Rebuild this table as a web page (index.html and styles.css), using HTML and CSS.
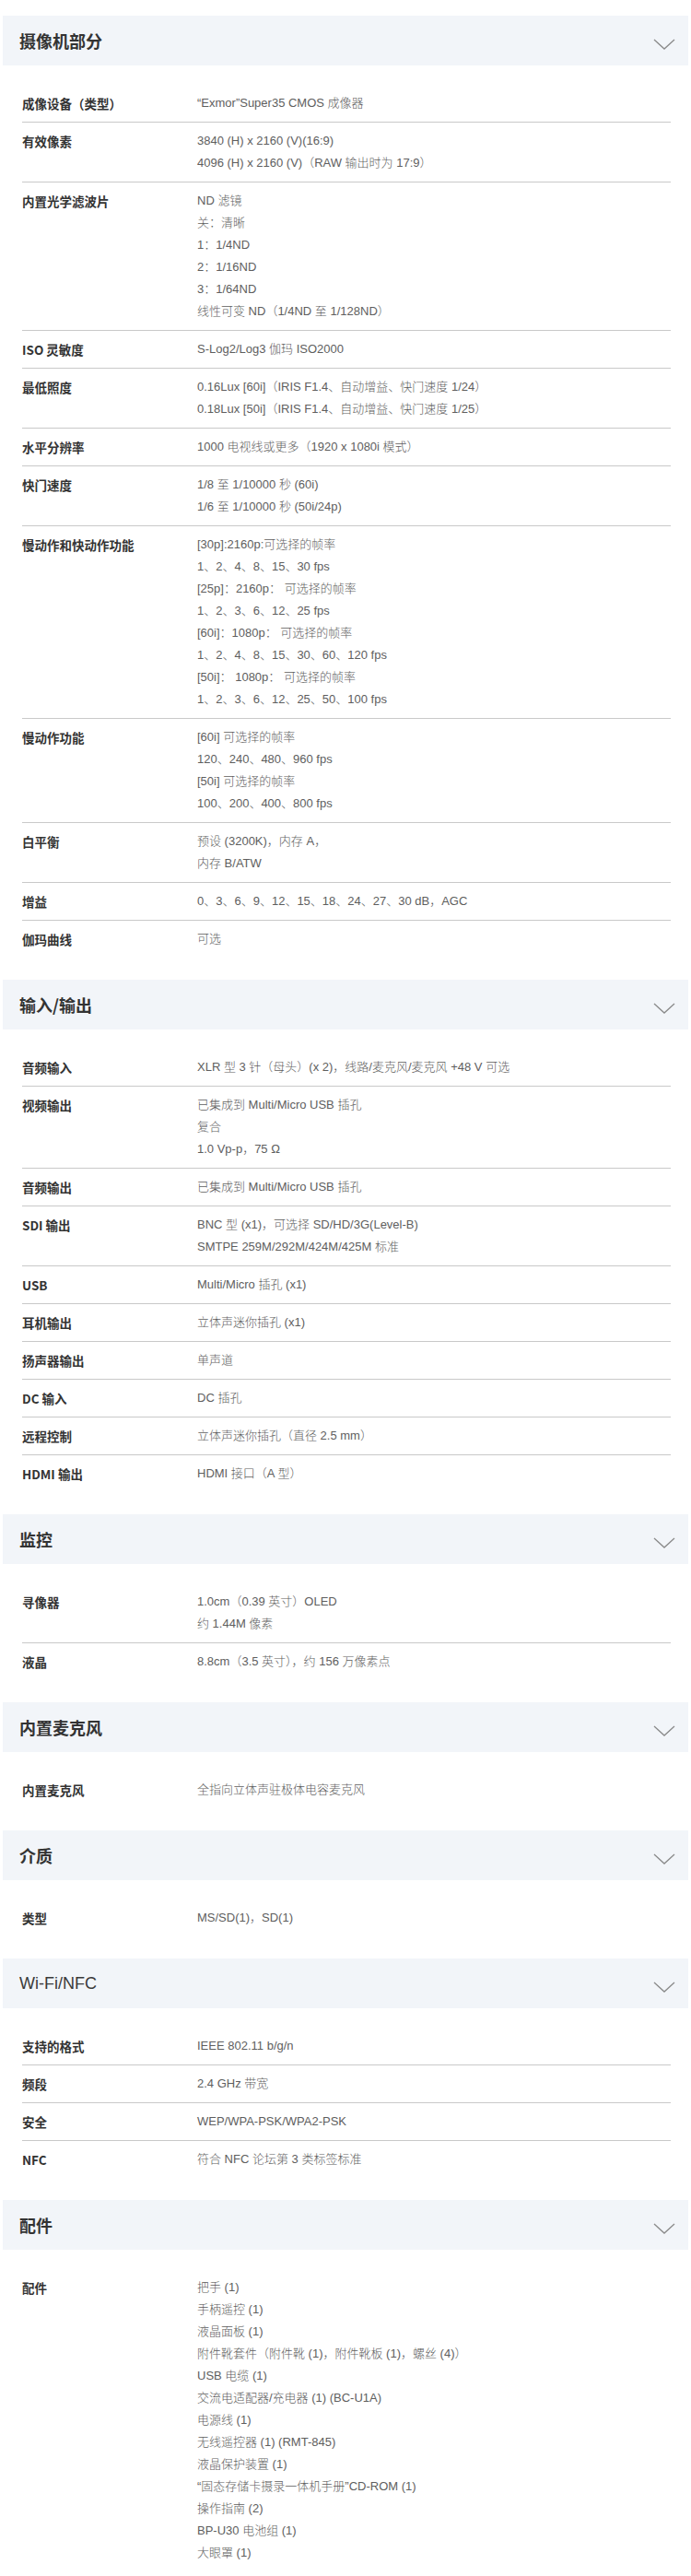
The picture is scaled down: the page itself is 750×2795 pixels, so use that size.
FILE: index.html
```html
<!DOCTYPE html>
<html lang="zh-CN">
<head>
<meta charset="utf-8">
<title>规格</title>
<link rel="stylesheet" href="styles.css">
</head>
<body>
<div class="page">

<section class="spec">
  <div class="band"><h2 class="title">摄像机部分</h2><svg class="chev" viewBox="0 0 24 12" width="24" height="12"><polyline points="1,1 12,11 23,1"/></svg></div>
  <div class="body">
    <div class="row"><div class="k">成像设备（类型）</div><div class="v"><div>“Exmor”Super35 CMOS 成像器</div></div></div>
    <div class="row"><div class="k">有效像素</div><div class="v"><div>3840 (H) x 2160 (V)(16:9)</div><div>4096 (H) x 2160 (V)（RAW 输出时为 17:9）</div></div></div>
    <div class="row"><div class="k">内置光学滤波片</div><div class="v"><div>ND 滤镜</div><div>关：清晰</div><div>1：1/4ND</div><div>2：1/16ND</div><div>3：1/64ND</div><div>线性可变 ND（1/4ND 至 1/128ND）</div></div></div>
    <div class="row"><div class="k">ISO 灵敏度</div><div class="v"><div>S-Log2/Log3 伽玛 ISO2000</div></div></div>
    <div class="row"><div class="k">最低照度</div><div class="v"><div>0.16Lux [60i]（IRIS F1.4、自动增益、快门速度 1/24）</div><div>0.18Lux [50i]（IRIS F1.4、自动增益、快门速度 1/25）</div></div></div>
    <div class="row"><div class="k">水平分辨率</div><div class="v"><div>1000 电视线或更多（1920 x 1080i 模式）</div></div></div>
    <div class="row"><div class="k">快门速度</div><div class="v"><div>1/8 至 1/10000 秒 (60i)</div><div>1/6 至 1/10000 秒 (50i/24p)</div></div></div>
    <div class="row"><div class="k">慢动作和快动作功能</div><div class="v"><div>[30p]:2160p:可选择的帧率</div><div>1、2、4、8、15、30 fps</div><div>[25p]：2160p： 可选择的帧率</div><div>1、2、3、6、12、25 fps</div><div>[60i]：1080p： 可选择的帧率</div><div>1、2、4、8、15、30、60、120 fps</div><div>[50i]： 1080p： 可选择的帧率</div><div>1、2、3、6、12、25、50、100 fps</div></div></div>
    <div class="row"><div class="k">慢动作功能</div><div class="v"><div>[60i] 可选择的帧率</div><div>120、240、480、960 fps</div><div>[50i] 可选择的帧率</div><div>100、200、400、800 fps</div></div></div>
    <div class="row"><div class="k">白平衡</div><div class="v"><div>预设 (3200K)，内存 A，</div><div>内存 B/ATW</div></div></div>
    <div class="row"><div class="k">增益</div><div class="v"><div>0、3、6、9、12、15、18、24、27、30 dB，AGC</div></div></div>
    <div class="row"><div class="k">伽玛曲线</div><div class="v"><div>可选</div></div></div>
  </div>
</section>

<section class="spec">
  <div class="band"><h2 class="title">输入/输出</h2><svg class="chev" viewBox="0 0 24 12" width="24" height="12"><polyline points="1,1 12,11 23,1"/></svg></div>
  <div class="body">
    <div class="row"><div class="k">音频输入</div><div class="v"><div>XLR 型 3 针（母头）(x 2)，线路/麦克风/麦克风 +48 V 可选</div></div></div>
    <div class="row"><div class="k">视频输出</div><div class="v"><div>已集成到 Multi/Micro USB 插孔</div><div>复合</div><div>1.0 Vp-p，75 Ω</div></div></div>
    <div class="row"><div class="k">音频输出</div><div class="v"><div>已集成到 Multi/Micro USB 插孔</div></div></div>
    <div class="row"><div class="k">SDI 输出</div><div class="v"><div>BNC 型 (x1)，可选择 SD/HD/3G(Level-B)</div><div>SMTPE 259M/292M/424M/425M 标准</div></div></div>
    <div class="row"><div class="k">USB</div><div class="v"><div>Multi/Micro 插孔 (x1)</div></div></div>
    <div class="row"><div class="k">耳机输出</div><div class="v"><div>立体声迷你插孔 (x1)</div></div></div>
    <div class="row"><div class="k">扬声器输出</div><div class="v"><div>单声道</div></div></div>
    <div class="row"><div class="k">DC 输入</div><div class="v"><div>DC 插孔</div></div></div>
    <div class="row"><div class="k">远程控制</div><div class="v"><div>立体声迷你插孔（直径 2.5 mm）</div></div></div>
    <div class="row"><div class="k">HDMI 输出</div><div class="v"><div>HDMI 接口（A 型）</div></div></div>
  </div>
</section>

<section class="spec">
  <div class="band"><h2 class="title">监控</h2><svg class="chev" viewBox="0 0 24 12" width="24" height="12"><polyline points="1,1 12,11 23,1"/></svg></div>
  <div class="body">
    <div class="row"><div class="k">寻像器</div><div class="v"><div>1.0cm（0.39 英寸）OLED</div><div>约 1.44M 像素</div></div></div>
    <div class="row"><div class="k">液晶</div><div class="v"><div>8.8cm（3.5 英寸），约 156 万像素点</div></div></div>
  </div>
</section>

<section class="spec">
  <div class="band"><h2 class="title">内置麦克风</h2><svg class="chev" viewBox="0 0 24 12" width="24" height="12"><polyline points="1,1 12,11 23,1"/></svg></div>
  <div class="body">
    <div class="row"><div class="k">内置麦克风</div><div class="v"><div>全指向立体声驻极体电容麦克风</div></div></div>
  </div>
</section>

<section class="spec">
  <div class="band"><h2 class="title">介质</h2><svg class="chev" viewBox="0 0 24 12" width="24" height="12"><polyline points="1,1 12,11 23,1"/></svg></div>
  <div class="body">
    <div class="row"><div class="k">类型</div><div class="v"><div>MS/SD(1)，SD(1)</div></div></div>
  </div>
</section>

<section class="spec">
  <div class="band"><h2 class="title title-latin">Wi-Fi/NFC</h2><svg class="chev" viewBox="0 0 24 12" width="24" height="12"><polyline points="1,1 12,11 23,1"/></svg></div>
  <div class="body">
    <div class="row"><div class="k">支持的格式</div><div class="v"><div>IEEE 802.11 b/g/n</div></div></div>
    <div class="row"><div class="k">频段</div><div class="v"><div>2.4 GHz 带宽</div></div></div>
    <div class="row"><div class="k">安全</div><div class="v"><div>WEP/WPA-PSK/WPA2-PSK</div></div></div>
    <div class="row"><div class="k">NFC</div><div class="v"><div>符合 NFC 论坛第 3 类标签标准</div></div></div>
  </div>
</section>

<section class="spec">
  <div class="band"><h2 class="title">配件</h2><svg class="chev" viewBox="0 0 24 12" width="24" height="12"><polyline points="1,1 12,11 23,1"/></svg></div>
  <div class="body last">
    <div class="row"><div class="k">配件</div><div class="v"><div>把手 (1)</div><div>手柄遥控 (1)</div><div>液晶面板 (1)</div><div>附件靴套件（附件靴 (1)，附件靴板 (1)，螺丝 (4)）</div><div>USB 电缆 (1)</div><div>交流电适配器/充电器 (1) (BC-U1A)</div><div>电源线 (1)</div><div>无线遥控器 (1) (RMT-845)</div><div>液晶保护装置 (1)</div><div>“固态存储卡摄录一体机手册”CD-ROM (1)</div><div>操作指南 (2)</div><div>BP-U30 电池组 (1)</div><div>大眼罩 (1)</div></div></div>
  </div>
</section>

</div>
</body>
</html>
```

FILE: styles.css
```css
html, body {
  margin: 0;
  padding: 0;
  background: #ffffff;
}

body {
  font-family: "Liberation Sans", "Noto Sans CJK SC", sans-serif;
  color: #333333;
}

.page {
  padding-top: 17px;
}

.band {
  display: flex;
  align-items: center;
  height: 54px;
  margin: 0 3px;
  padding: 0 14px 0 18px;
  background: #f2f5f9;
}

.title {
  flex: 1;
  margin: 0;
  font-family: "Noto Sans CJK SC", sans-serif;
  font-size: 18px;
  font-weight: 700;
  color: #333333;
  line-height: 24px;
}

.title-latin {
  font-family: "Liberation Sans", "Noto Sans CJK SC", sans-serif;
  font-weight: 400;
  font-size: 18px;
  color: #3a3a3a;
}

.chev {
  display: block;
  margin-top: 7px;
  fill: none;
  stroke: #8a8a8a;
  stroke-width: 1.3;
}

.body {
  padding: 21px 22px 24px 24px;
}

.body.last {
  padding-bottom: 4px;
}

.row {
  display: grid;
  grid-template-columns: 190px 1fr;
  padding: 8px 0;
  border-bottom: 1px solid #c9c9c9;
  line-height: 24px;
}

.row:last-child {
  border-bottom: none;
}

.k {
  font-family: "Noto Sans CJK SC", sans-serif;
  font-size: 13.5px;
  font-weight: 700;
  color: #333333;
}

.v {
  font-family: "Liberation Sans", "Noto Sans CJK SC", sans-serif;
  font-size: 13px;
  font-weight: 300;
  color: #5e5e5e;
}
```
